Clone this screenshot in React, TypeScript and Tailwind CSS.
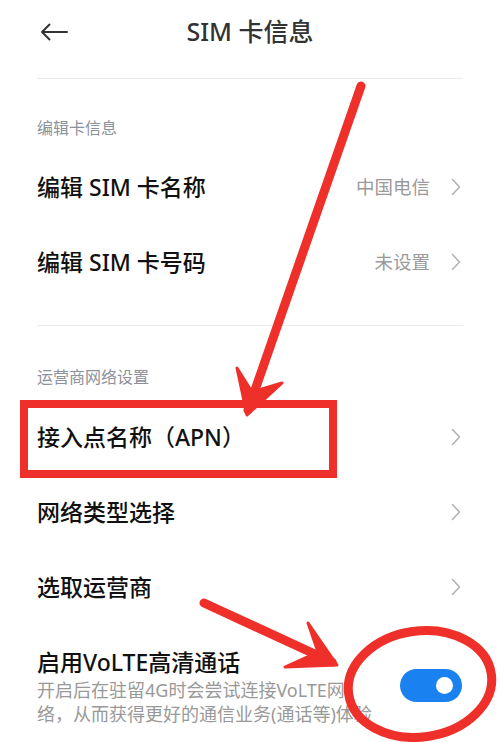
import React from "react";

const Chevron = () => (
  <svg width="10" height="18" viewBox="0 0 10 18" className="shrink-0">
    <polyline points="1.5,1.5 8.5,9 1.5,16.5" fill="none" stroke="#b3b3b3" strokeWidth="1.6" strokeLinecap="round" strokeLinejoin="round" />
  </svg>
);

const Row = ({ label, value }: { label: string; value?: string }) => (
  <div className="h-[75px] flex items-center justify-between pl-[37px] pr-[39px]">
    <span className="text-[23px] leading-[30px] font-medium text-[#111]">{label}</span>
    <div className="flex items-center gap-[21px]">
      {value && <span className="text-[18.5px] text-[#9a9a9a]">{value}</span>}
      <Chevron />
    </div>
  </div>
);

export default function App() {
  return (
    <div
      className="relative w-[500px] h-[742px] overflow-hidden bg-white"
      style={{ fontFamily: '"Noto Sans", "Noto Sans CJK SC", sans-serif' }}
    >
      {/* Header */}
      <div className="relative h-[64px] flex items-center justify-center">
        <svg width="28" height="18" viewBox="0 0 28 18" className="absolute left-[40px] top-[23px]">
          <path d="M27 9H2M9.5 1.5L2 9l7.5 7.5" fill="none" stroke="#333" strokeWidth="2" strokeLinecap="round" strokeLinejoin="round" />
        </svg>
        <span className="text-[25px] font-medium text-[#333]">SIM 卡信息</span>
      </div>
      <div className="h-[14px]" />
      <div className="mx-[37px] h-px bg-[#ebebeb]" />

      {/* Section 1 */}
      <div className="pt-[39px] pb-[11px] pl-[37px] text-[16px] leading-[20px] text-[#8c919b]">编辑卡信息</div>
      <Row label="编辑 SIM 卡名称" value="中国电信" />
      <Row label="编辑 SIM 卡号码" value="未设置" />
      <div className="h-[26px]" />
      <div className="mx-[37px] h-px bg-[#ebebeb]" />

      {/* Section 2 */}
      <div className="pt-[41px] pb-[12px] pl-[37px] text-[16px] leading-[20px] text-[#8c919b]">运营商网络设置</div>
      <Row label="接入点名称（APN）" />
      <Row label="网络类型选择" />
      <Row label="选取运营商" />

      <div className="flex items-start justify-between pl-[37px] pr-[38px] pt-[23px]">
        <div>
          <div className="text-[23px] leading-[30px] font-medium text-[#111]">启用VoLTE高清通话</div>
          <div className="mt-[1px] text-[18px] leading-[24px] text-[#999]">
            <div>开启后在驻留4G时会尝试连接VoLTE网</div>
            <div>络，从而获得更好的通信业务(通话等)体验</div>
          </div>
        </div>
        <div className="relative mt-[22px] w-[62px] h-[33px] rounded-full bg-[#1a82f0] shrink-0">
          <div className="absolute right-[9px] top-[8px] w-[17px] h-[17px] rounded-full bg-white" />
        </div>
      </div>

      {/* Annotation overlay */}
      <svg className="absolute inset-0 pointer-events-none" width="500" height="742" viewBox="0 0 500 742">
        <g stroke="#ee2f2a" fill="none" strokeLinecap="round" strokeLinejoin="round">
          <line x1="361" y1="86" x2="248" y2="410" strokeWidth="9" />
          <polygon points="237,368 247,415 282,383 252,392" fill="#ee2f2a" strokeWidth="3" />
          <rect x="24" y="404" width="309" height="70" strokeWidth="8" strokeLinejoin="miter" />
          <line x1="204" y1="603" x2="332" y2="662" strokeWidth="9" />
          <polygon points="308,623 337,665 285,667 318,652" fill="#ee2f2a" strokeWidth="3" />
          <ellipse cx="420" cy="684" rx="72" ry="53" transform="rotate(-8 420 684)" strokeWidth="9" />
        </g>
      </svg>
    </div>
  );
}
